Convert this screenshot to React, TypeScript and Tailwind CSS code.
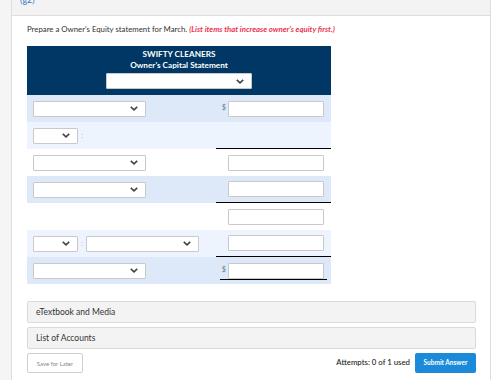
import React from "react";

const Chevron = () => (
  <svg width="8" height="5" viewBox="0 0 8 5" className="shrink-0">
    <polyline points="0.8,0.8 4,3.8 7.2,0.8" fill="none" stroke="#444" strokeWidth="1.6" />
  </svg>
);

const Select = ({ w }: { w: string }) => (
  <div className={`${w} h-[16px] bg-white border border-[#c9c9c9] rounded-[1px] flex items-center justify-end pr-[7px] shrink-0`}>
    <Chevron />
  </div>
);

const Input = () => <div className="w-[96px] h-[16px] bg-white border border-[#c9c9c9] rounded-[1px] shrink-0" />;

const Dollar = () => (
  <div className="w-[6px] ml-[2px] shrink-0 text-[6.5px] leading-none text-[#7d8aa0] font-bold">$</div>
);

const Colon = () => <span className="text-[7px] leading-none text-[#9fb6d6] mx-[3px]">:</span>;

export default function App() {
  const rowBase = "h-[27px] flex items-stretch";
  return (
    <div className="w-[491px] h-[380px] overflow-hidden flex bg-white" style={{ fontFamily: "Lato, 'Open Sans', sans-serif" }}>
      <div className="w-[12px] shrink-0 bg-[#f5f5f5] border-r border-[#dedede]" />
      <div className="w-[479px] shrink-0 flex flex-col border-r border-[#dedede]">
        <div className="h-[16px] bg-[#f3f3f3] border-b border-[#dedede] overflow-hidden pl-[8px]">
          <div className="text-[9px] leading-[9px] text-[#3a78c3] mt-[-5px]">(g2)</div>
        </div>
        <div className="flex flex-col pl-[15px] pr-[14px]">
          <div className="mt-[8px] h-[10px] text-[7.8px] leading-[10px] text-[#333] whitespace-nowrap">
            Prepare a Owner's Equity statement for March.{" "}
            <span className="text-[#ec3350] font-bold italic">(List items that increase owner's equity first.)</span>
          </div>
          <div className="mt-[12px] w-[304px] flex flex-col">
            <div className="h-[49px] bg-[#003764] flex flex-col items-center pt-[3px]">
              <div className="text-white font-bold text-[8.2px] leading-[11px]">SWIFTY CLEANERS</div>
              <div className="text-white font-bold text-[8.2px] leading-[11px]">Owner's Capital Statement</div>
              <div className="mt-[2px]">
                <Select w="w-[146px]" />
              </div>
            </div>
            {/* row 1 */}
            <div className={`${rowBase} bg-[#dde8f8]`}>
              <div className="flex-1 flex items-center pl-[6px]"><Select w="w-[113px]" /></div>
              <div className="w-[115px] flex items-center">
                <div className="ml-[4px] w-[107px] flex items-center"><Dollar /><Input /></div>
              </div>
            </div>
            {/* row 2 */}
            <div className={`${rowBase} bg-[#eef4fd]`}>
              <div className="flex-1 flex items-center pl-[6px]"><Select w="w-[45px]" /><Colon /></div>
              <div className="w-[115px] border-b border-black" />
            </div>
            {/* row 3 */}
            <div className={`${rowBase} bg-white`}>
              <div className="flex-1 flex items-center pl-[6px]"><Select w="w-[113px]" /></div>
              <div className="w-[115px] flex items-center pl-[12px]"><Input /></div>
            </div>
            {/* row 4 */}
            <div className={`${rowBase} bg-[#dde8f8]`}>
              <div className="flex-1 flex items-center pl-[6px]"><Select w="w-[113px]" /></div>
              <div className="w-[115px] flex items-center pl-[12px] border-b border-black"><Input /></div>
            </div>
            {/* row 5 */}
            <div className={`${rowBase} bg-white`}>
              <div className="flex-1" />
              <div className="w-[115px] flex items-center pl-[12px]"><Input /></div>
            </div>
            {/* row 6 */}
            <div className={`${rowBase} bg-[#eef4fd]`}>
              <div className="flex-1 flex items-center pl-[6px]"><Select w="w-[45px]" /><Colon /><Select w="w-[113px]" /></div>
              <div className="w-[115px] flex items-center pl-[12px] border-b border-black"><Input /></div>
            </div>
            {/* row 7 */}
            <div className={`${rowBase} bg-[#dde8f8]`}>
              <div className="flex-1 flex items-center pl-[6px]"><Select w="w-[113px]" /></div>
              <div className="w-[115px] flex items-center pt-[1px]">
                <div className="ml-[4px] w-[107px] flex items-center border-b border-black"><Dollar /><Input /></div>
              </div>
            </div>
          </div>
          <div className="mt-[17px] h-[22px] bg-[#f3f3f3] border border-[#dadada] rounded-[2px] flex items-center pl-[8px] text-[8.5px] text-[#333]">
            eTextbook and Media
          </div>
          <div className="mt-[4px] h-[22px] bg-[#f3f3f3] border border-[#dadada] rounded-[2px] flex items-center pl-[8px] text-[8.5px] text-[#333]">
            List of Accounts
          </div>
          <div className="mt-[4px] flex items-center">
            <div className="w-[56px] h-[20px] border border-[#cfcfcf] rounded-[2px] bg-white flex items-center justify-center text-[6px] text-[#888]">
              Save for Later
            </div>
            <div className="flex-1" />
            <div className="text-[7.8px] text-[#222] font-medium mr-[5px]">Attempts: 0 of 1 used</div>
            <div className="w-[61px] h-[20px] rounded-[2px] bg-[#1a8ad9] flex items-center justify-center text-[6.5px] font-bold text-white whitespace-nowrap">
              Submit Answer
            </div>
          </div>
        </div>
      </div>
    </div>
  );
}
